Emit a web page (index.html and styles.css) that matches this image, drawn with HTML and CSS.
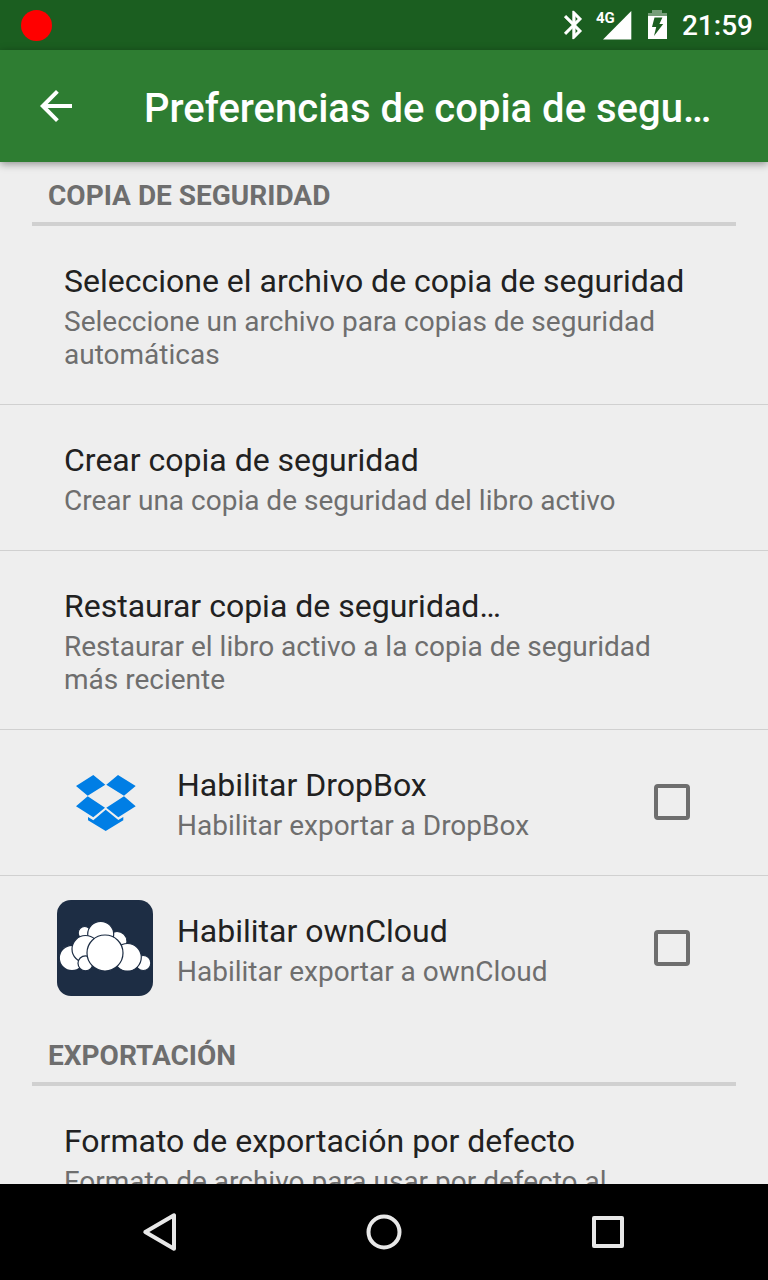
FILE: index.html
```html
<!DOCTYPE html>
<html lang="es">
<head>
<meta charset="utf-8">
<meta name="viewport" content="width=device-width, initial-scale=1">
<title>Preferencias de copia de seguridad</title>
<link rel="stylesheet" href="styles.css">
</head>
<body>
<div class="screen">
  <div class="status-bar">
    <span class="record-dot"></span>
    <div class="status-icons">
      <svg width="18" height="30" viewBox="4.9 1.7 12.9 20.7" aria-hidden="true"><path fill="#fff" stroke="#fff" stroke-width=".3" d="M17.71 7.71L12 2h-1v7.59L6.41 5 5 6.41 10.59 12 5 17.59 6.41 19 11 14.41V22h1l5.71-5.71-4.3-4.29 4.3-4.29zM13 5.83l1.88 1.88L13 9.59V5.83zm1.88 10.46L13 18.17v-3.76l1.88 1.88z"/></svg>
      <div class="signal">
        <svg width="36" height="30" viewBox="0 0 36 30" aria-hidden="true"><path fill="#fff" d="M7 29.500L35.300 1v28.500z"/></svg>
        <span class="signal-type">4G</span>
      </div>
      <svg width="22" height="30" viewBox="0 0 22 30" aria-hidden="true"><path fill="#fff" fill-opacity=".4" d="M6 0h10v3h5v3H2V3h4z"/><path fill="#fff" fill-rule="evenodd" d="M2 6h19v23H2zM8.500 7.500L6 17h4.200L8 26l9.200-12h-3.800l3-6.500z"/></svg>
      <span class="clock">21:59</span>
    </div>
  </div>

  <header class="app-bar">
    <button class="back" type="button" aria-label="Atrás">
      <svg width="32" height="32" viewBox="0 0 32 32" aria-hidden="true"><path fill="#fff" d="M32 14H7.700L18.800 2.800 16 0 0 16l16 16 2.800-2.800L7.700 18H32z"/></svg>
    </button>
    <h1 class="app-title">Preferencias de copia de segu…</h1>
  </header>

  <main class="content">
    <section>
      <h2 class="section-title">COPIA DE SEGURIDAD</h2>
      <button class="item" type="button">
        <span class="item-text">
          <span class="item-title">Seleccione el archivo de copia de seguridad</span>
          <span class="item-summary">Seleccione un archivo para copias de seguridad automáticas</span>
        </span>
      </button>
      <button class="item" type="button">
        <span class="item-text">
          <span class="item-title">Crear copia de seguridad</span>
          <span class="item-summary">Crear una copia de seguridad del libro activo</span>
        </span>
      </button>
      <button class="item" type="button">
        <span class="item-text">
          <span class="item-title">Restaurar copia de seguridad…</span>
          <span class="item-summary">Restaurar el libro activo a la copia de seguridad más reciente</span>
        </span>
      </button>
      <label class="item item-check" for="dropbox">
        <svg class="item-icon" width="96" height="96" viewBox="0 0 96 96" aria-hidden="true"><path fill="#007ee5" d="M19 32L36.300 21l12 9.700-17.600 11zM61 21l17.700 11L67 41.700l-17.700-11zM30.700 42.300L48 53.700l-11.700 9.600L19 52.300zM67 42.300l11.700 10-17.400 11-12-9.600zM31 63l5.300 3.300 12.400-10.600L61.300 66l5-3v3.300L48.700 77 31 66.300z"/></svg>
        <span class="item-text">
          <span class="item-title">Habilitar DropBox</span>
          <span class="item-summary">Habilitar exportar a DropBox</span>
        </span>
        <input class="checkbox" type="checkbox" id="dropbox">
      </label>
      <label class="item item-check" for="owncloud">
        <svg class="item-icon" width="96" height="96" viewBox="0 0 96 96" aria-hidden="true">
          <rect width="96" height="96" rx="14" fill="#1d2d44"/>
          <g fill="#fff" stroke="#1d2d44" stroke-width="1.200">
            <circle cx="15" cy="58" r="12.700"/>
            <circle cx="27.700" cy="33" r="6.500"/>
            <circle cx="60" cy="41.500" r="10"/>
            <circle cx="43.700" cy="34.300" r="13"/>
            <circle cx="28.500" cy="49" r="13.500"/>
            <circle cx="86.300" cy="63" r="7.500"/>
            <circle cx="70.500" cy="57.300" r="13.800"/>
            <circle cx="28.500" cy="63.300" r="7.500"/>
            <circle cx="48" cy="53" r="18"/>
          </g>
        </svg>
        <span class="item-text">
          <span class="item-title">Habilitar ownCloud</span>
          <span class="item-summary">Habilitar exportar a ownCloud</span>
        </span>
        <input class="checkbox" type="checkbox" id="owncloud">
      </label>
    </section>
    <section>
      <h2 class="section-title">EXPORTACIÓN</h2>
      <button class="item" type="button">
        <span class="item-text">
          <span class="item-title">Formato de exportación por defecto</span>
          <span class="item-summary">Formato de archivo para usar por defecto al</span>
        </span>
      </button>
    </section>
  </main>

  <nav class="nav-bar">
    <button class="nav-button" type="button" aria-label="Volver">
      <svg width="48" height="48" viewBox="0 0 48 48" aria-hidden="true"><path d="M9.300 24L38 7.300v33.400z"/></svg>
    </button>
    <button class="nav-button" type="button" aria-label="Inicio">
      <svg width="48" height="48" viewBox="0 0 48 48" aria-hidden="true"><circle cx="24" cy="24" r="15.500"/></svg>
    </button>
    <button class="nav-button" type="button" aria-label="Recientes">
      <svg width="48" height="48" viewBox="0 0 48 48" aria-hidden="true"><path d="M10 10h28v28H10z"/></svg>
    </button>
  </nav>
</div>
</body>
</html>
```
FILE: styles.css
```css
* {
  box-sizing: border-box;
}

body {
  margin: 0;
  font-family: Roboto, "Noto Sans", sans-serif;
  background: #eeeeee;
}

svg {
  display: block;
  flex: none;
}

button {
  margin: 0;
  padding: 0;
  border: 0;
  background: none;
  font: inherit;
  color: inherit;
}

.screen {
  display: flex;
  flex-direction: column;
  height: 100vh;
}

.status-bar {
  display: flex;
  flex: none;
  align-items: center;
  justify-content: space-between;
  height: 50px;
  padding: 0 15px 0 21px;
  background: #1b5e20;
  color: #fff;
}

.record-dot {
  width: 31px;
  height: 31px;
  border-radius: 50%;
  background: #f00;
}

.status-icons {
  display: flex;
  align-items: center;
  gap: 14px;
}

.signal {
  position: relative;
}

.signal-type {
  position: absolute;
  top: 0;
  left: 0;
  font-size: 15px;
  font-weight: 700;
  line-height: 16px;
}

.clock {
  font-size: 28px;
  font-weight: 500;
  line-height: 33px;
}

.app-bar {
  position: relative;
  display: flex;
  flex: none;
  align-items: center;
  height: 112px;
  padding: 0 32px 0 40px;
  gap: 72px;
  background: #2e7d32;
  color: #fff;
  box-shadow: 0 2px 8px rgba(0, 0, 0, 0.4);
}

.app-title {
  min-width: 0;
  margin: 0;
  padding-top: 6px;
  overflow: hidden;
  font-size: 40px;
  font-weight: 500;
  line-height: 48px;
  text-overflow: ellipsis;
  white-space: nowrap;
}

.content {
  flex: 1;
  min-height: 0;
  overflow-y: auto;
  scrollbar-width: none;
}

.section-title {
  height: 64px;
  margin: 0 32px;
  padding: 17px 16px 0;
  border-bottom: 4px solid #d0d0d0;
  color: #6e6e6e;
  font-size: 28px;
  font-weight: 700;
  line-height: 33px;
}

.item {
  display: flex;
  align-items: center;
  width: 100%;
  padding: 0 64px;
  border-bottom: 1px solid #d0d0d0;
  text-align: left;
}

.item:last-child {
  border-bottom-color: transparent;
}

.item-check {
  gap: 24px;
  padding: 0 78px 0 57px;
}

.item-icon {
  margin-bottom: 1px;
}

.item-text {
  display: flex;
  flex: 1;
  flex-direction: column;
  gap: 2px;
  padding: 34px 0 33px;
}

.item-title {
  color: #212121;
  font-size: 32px;
  line-height: 43px;
}

.item-summary {
  color: #6e6e6e;
  font-size: 28px;
  line-height: 33px;
}

.checkbox {
  flex: none;
  width: 36px;
  height: 36px;
  margin: 0 0 1px;
  border: 4px solid #6e6e6e;
  border-radius: 4px;
  appearance: none;
}

.checkbox:checked {
  background: #6e6e6e;
}

.nav-bar {
  display: flex;
  flex: none;
  height: 96px;
  padding: 0 48px;
  background: #000;
}

.nav-button {
  display: flex;
  flex: 1;
  align-items: center;
  justify-content: center;
}

.nav-button svg {
  fill: none;
  stroke: #e8e8e8;
  stroke-width: 4;
  stroke-linejoin: round;
}
```
